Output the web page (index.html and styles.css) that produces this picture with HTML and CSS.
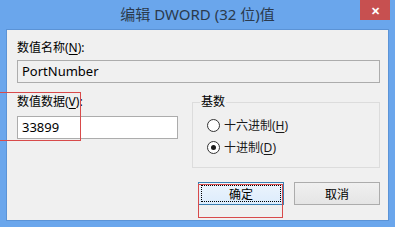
FILE: index.html
```html
<!DOCTYPE html>
<html lang="zh-CN">
<head>
    <meta charset="UTF-8">
    <meta name="viewport" content="width=device-width, initial-scale=1.0">
    <title>编辑 DWORD (32 位)值</title>
    <link rel="stylesheet" href="styles.css">
</head>
<body>
    <div class="window">
        <div class="titlebar">
            <span class="title">编辑 DWORD (32 位)值</span>
            <span class="close">&#x2715;</span>
        </div>
        <div class="client">
            <div class="label">数值名称(<u>N</u>):</div>
            <div class="field readonly">PortNumber</div>
            <div class="row">
                <div class="data">
                    <div class="label">数值数据(<u>V</u>):</div>
                    <div class="field short">33899</div>
                </div>
                <fieldset class="base">
                    <legend>基数</legend>
                    <div class="radio"><span class="dot"></span>十六进制(<u>H</u>)</div>
                    <div class="radio"><span class="dot checked"></span>十进制(<u>D</u>)</div>
                </fieldset>
            </div>
            <div class="buttons">
                <div class="btn default"><span class="focus">确定</span></div>
                <div class="btn">取消</div>
            </div>
        </div>
        <div class="mark mark-data"></div>
        <div class="mark mark-ok"></div>
    </div>
</body>
</html>
```

FILE: styles.css
```css
body {
    margin: 0;
    font-family: "Noto Sans", "Noto Sans CJK SC", sans-serif;
    font-size: 12px;
    color: #000;
}
.window {
    position: relative;
    width: 395px;
    height: 227px;
    background: #6aa6ec;
    overflow: hidden;
}
.titlebar {
    height: 29px;
    display: flex;
    justify-content: center;
    align-items: center;
}
.title {
    font-size: 15px;
    color: #2b3a4c;
    margin-top: -2px;
}
.close {
    position: absolute;
    top: 0;
    right: 5px;
    width: 30px;
    height: 20px;
    background: #c75050;
    color: #fff;
    font-size: 11px;
    font-weight: bold;
    display: flex;
    justify-content: center;
    align-items: center;
}
.client {
    margin: 0 6px;
    height: 192px;
    box-sizing: border-box;
    border: 1px solid #5b93d6;
    background: #f0f0f0;
    padding: 10px 8px 0 10px;
}
.label {
    line-height: 16px;
}
u {
    text-decoration-thickness: 1px;
    text-underline-offset: 2px;
}
.field {
    height: 23px;
    box-sizing: border-box;
    border: 1px solid #acacac;
    background: #fff;
    padding-left: 4px;
    font-size: 13px;
    line-height: 21px;
    margin-top: 4px;
}
.field.readonly {
    background: #f0f0f0;
}
.row {
    display: flex;
    justify-content: space-between;
    margin-top: 11px;
}
.data .field {
    margin-top: 6px;
    width: 161px;
}
.base {
    margin: 0;
    width: 188px;
    height: 74px;
    box-sizing: border-box;
    border: 1px solid #dcdcdc;
    padding: 0 0 0 14px;
}
.base legend {
    padding: 0 1px;
    margin-left: -7px;
    line-height: 16px;
}
.radio {
    display: flex;
    align-items: center;
    height: 22px;
    color: #1a1a1a;
}
.radio:first-of-type {
    margin-top: 4px;
}
.dot {
    width: 13px;
    height: 13px;
    box-sizing: border-box;
    border: 1px solid #333;
    border-radius: 50%;
    background: #fff;
    margin-right: 4px;
    display: flex;
    justify-content: center;
    align-items: center;
}
.dot.checked::after {
    content: "";
    width: 5px;
    height: 5px;
    border-radius: 50%;
    background: #1a1a1a;
}
.buttons {
    display: flex;
    justify-content: flex-end;
    gap: 10px;
    margin-top: 14px;
}
.btn {
    width: 86px;
    height: 23px;
    box-sizing: border-box;
    border: 1px solid #acacac;
    background: linear-gradient(#f0f0f0, #e5e5e5);
    display: flex;
    justify-content: center;
    align-items: center;
}
.btn.default {
    border-color: #3c7fb1;
    background: linear-gradient(#ecf4fc, #dcecfc);
    padding: 2px;
}
.focus {
    flex: 1;
    align-self: stretch;
    border: 1px dotted #000;
    display: flex;
    justify-content: center;
    align-items: center;
}
.mark {
    position: absolute;
    border: 1px solid #d84a4a;
}
.mark-data {
    left: -2px;
    top: 92px;
    width: 81px;
    height: 47px;
}
.mark-ok {
    left: 198px;
    top: 184px;
    width: 83px;
    height: 32px;
}
```
